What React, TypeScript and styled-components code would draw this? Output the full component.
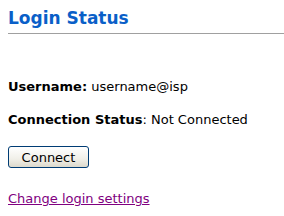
import styled, { createGlobalStyle } from 'styled-components'

const GlobalStyle = createGlobalStyle`
  body {
    margin: 0;
    background: #ffffff;
    font-family: "DejaVu Sans", Verdana, sans-serif;
    color: #000000;
  }
`

export default function App() {
  return (
    <>
      <GlobalStyle />
      <Page>
        <Title>Login Status</Title>
        <Divider />
        <Info>
          <Row>
            <Label>Username:</Label> username@isp
          </Row>
          <Row>
            <Label>Connection Status</Label>: Not Connected
          </Row>
        </Info>
        <Button type="button">Connect</Button>
        <Link href="#">Change login settings</Link>
      </Page>
    </>
  )
}

const Page = styled.div`
  width: 276px;
  padding: 8px 0 0 8px;
  display: flex;
  flex-direction: column;
  align-items: flex-start;
`

const Title = styled.h1`
  margin: 0;
  font-size: 17px;
  font-weight: bold;
  color: #0a5fc8;
  line-height: 20px;
`

const Divider = styled.hr`
  align-self: stretch;
  margin: 5px 0 0 0;
  border: none;
  border-top: 1px solid #a0a0a0;
  height: 0;
`

const Info = styled.div`
  margin-top: 45px;
  display: flex;
  flex-direction: column;
  gap: 18px;
`

const Row = styled.div`
  font-size: 13px;
  line-height: 15px;
`

const Label = styled.b`
  font-weight: bold;
`

const Button = styled.button`
  margin-top: 19px;
  width: 81px;
  height: 22px;
  padding: 0;
  font-family: "DejaVu Sans", Verdana, sans-serif;
  font-size: 13px;
  color: #000000;
  border: 1px solid #003c74;
  border-radius: 3px;
  background: linear-gradient(#ffffff, #f0efe8 60%, #dcd9cc);
`

const Link = styled.a`
  margin-top: 23px;
  font-size: 13px;
  line-height: 15px;
  color: #800080;
  text-decoration: underline;
`
